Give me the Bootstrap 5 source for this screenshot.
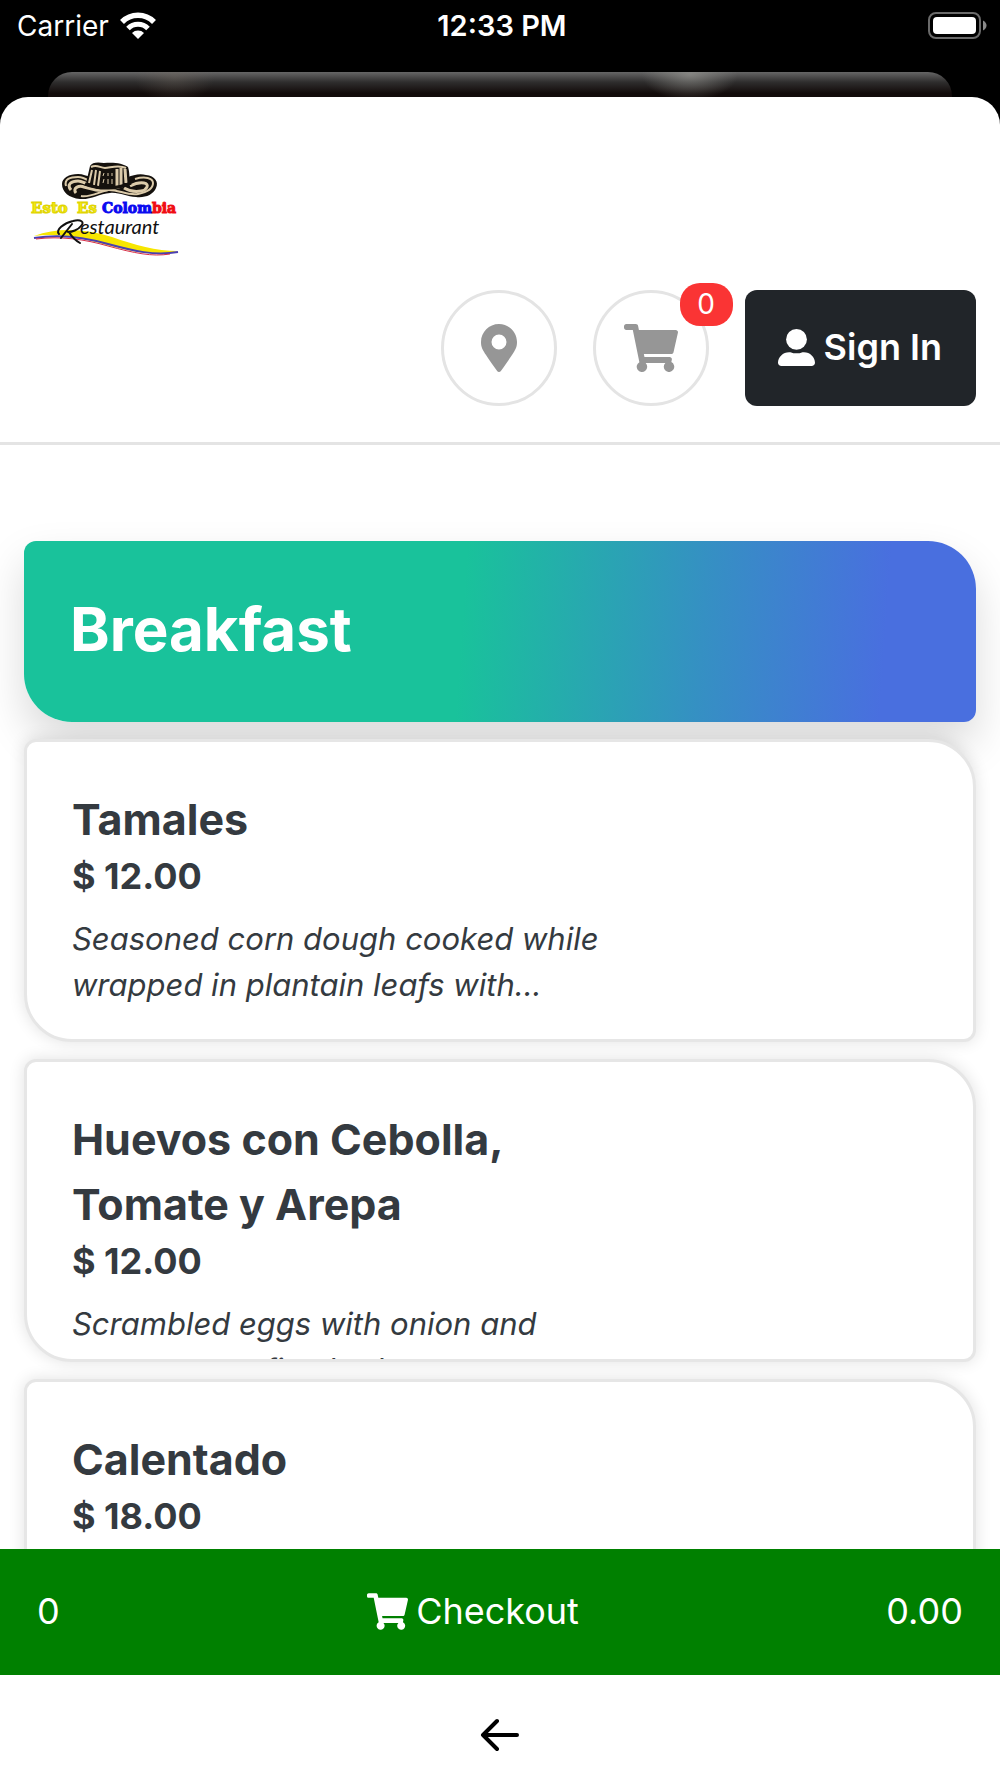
<!DOCTYPE html>
<html lang="en">
<head>
<meta charset="utf-8">
<meta name="viewport" content="width=device-width, initial-scale=1">
<title>Esto Es Colombia Restaurant</title>
<link href="https://cdn.jsdelivr.net/npm/bootstrap@5.3.0/dist/css/bootstrap.min.css" rel="stylesheet">
<style>
  body { font-family: Inter, "Liberation Sans", sans-serif; background: #000; color: #343a40; }
  .phone-status { height: 72px; padding: 0 13px 20px 17px; font-size: 28px; line-height: 34px; color: #fff; }
  .phone-status > * { flex: 1 1 0; }
  .phone-clock { font-size: 29px; font-weight: 600; }
  .sheet-behind { height: 25px; margin: 0 48px; border-radius: 24px 24px 0 0;
    background:
      radial-gradient(ellipse 48px 26px at 71% 10%, rgba(160,160,155,.6), transparent),
      radial-gradient(ellipse 40px 26px at 14% 20%, rgba(120,110,100,.35), transparent),
      linear-gradient(#666, #2f2e2e 40%, #120b0a 85%); }
  .sheet { background: #fff; border-radius: 28px 28px 0 0; min-height: 0; }
  .shop-header { padding: 58px 24px 36px; border-bottom: 3px solid #e4e4e4; }
  .brand-logo { width: 165px; height: 105px; margin-left: -4px; }
  .header-actions { gap: 36px; margin-top: 30px; }
  .round-btn { width: 116px; height: 116px; border: 3px solid #e4e4e4; color: #969696; }
  .cart-count { top: -10px; right: -27px; min-width: 53px; height: 43px; border-radius: 20px; background: #fa3434; color: #fff; font-size: 28px; line-height: 43px; }
  .signin-btn { height: 116px; padding: 0 34px 2px 33px; border-radius: 12px; background: #212529; color: #fff; font-size: 36px; font-weight: 600; gap: 9px; }
  .signin-btn:hover { background: #343a40; color: #fff; }
  .menu-list { padding: 96px 24px 0; gap: 17px; min-height: 0; }
  .menu-banner { padding: 42px 46px 47px; border-radius: 12px 48px 12px 48px; color: #fff; font-size: 60px; line-height: 92px; font-weight: 700;
    background: linear-gradient(94deg, #19c29b 46%, #3590c3 71%, #496fdf 90%); box-shadow: 0 21px 43px rgba(0,0,0,.15); }
  .dish { height: 303px; padding: 45px 45px 0; border: 3px solid #e6e6e6; border-radius: 12px 48px 12px 48px; box-shadow: 0 0 16px rgba(0,0,0,.12); color: #343a40; }
  .dish:hover { color: #343a40; }
  .dish-text { width: 64%; }
  .dish-name { font-size: 43px; line-height: 65px; font-weight: 700; }
  .dish-price { font-size: 36px; line-height: 48px; font-weight: 700; margin-bottom: 16px; }
  .dish-info { font-size: 31px; line-height: 46px; font-style: italic; }
  .checkout-bar { height: 126px; padding: 0 37px 2px; background: #008000; color: #fff; font-size: 36px; }
  .checkout-bar:hover { color: #fff; }
  .back-bar { height: 103px; }
</style>
</head>
<body class="vh-100 d-flex flex-column overflow-hidden">
  <div class="phone-status flex-shrink-0 d-flex align-items-center">
    <div class="d-flex align-items-center gap-2"><span>Carrier</span>
      <svg width="42" height="28" viewBox="0 0 42 28" fill="none" stroke="#fff" aria-label="Wi-Fi">
        <path d="M5 10a22.500 22.500 0 0 1 32 0" stroke-width="5.500"/>
        <path d="M11 16.500a14 14 0 0 1 20 0" stroke-width="5"/>
        <path d="M21 27l-6-6a8.500 8.500 0 0 1 12 0z" fill="#fff" stroke="none"/>
      </svg>
    </div>
    <div class="phone-clock text-center">12:33 PM</div>
    <div class="d-flex justify-content-end">
      <svg width="60" height="28" viewBox="0 0 60 28" aria-label="Battery full">
        <rect x="2" y="1" width="51" height="25" rx="7" fill="none" stroke="#6a6a6a" stroke-width="2"/>
        <rect x="6" y="5" width="43" height="17" rx="4" fill="#fff"/>
        <path d="M56 8.500q3.500 2 3.500 5t-3.500 5z" fill="#8a8a8a"/>
      </svg>
    </div>
  </div>
  <div class="sheet-behind flex-shrink-0"></div>

  <div class="sheet flex-grow-1 d-flex flex-column overflow-hidden">
    <header class="shop-header flex-shrink-0">
      <a href="#" class="d-block" aria-label="Home">
        <svg class="brand-logo d-block" viewBox="0 0 165 105">
          <path d="M42 29c0-6 7-10 16-10 5 0 9 2 12 3h38c5-2 12-4 18-2 9 1 13 7 10 13-3 7-11 10-20 9-9 0-17-5-26-4-11 1-20 7-30 6-11-1-18-7-18-15z" fill="#15110d"/>
          <g fill="none" stroke="#dccbaa" stroke-width="2">
            <path d="M46 31c-2-7 4-9 12-9 5 0 8 2 11 4"/>
            <path d="M51 35c-5-6 1-9 7-9 4 0 8 3 13 4" stroke-width="3"/>
            <path d="M56 38c-4-5 3-8 8-6l12 3c11 1 22-2 31-6" stroke-width="3"/>
            <path d="M61 41c8 2 18-4 27-6 9-1 20 6 30 4s15-6 15-11-8-7-18-4"/>
            <path d="M104 33c5 3 11 4 17 3s9-7 3-8-10 1-14 3" stroke-width="3"/>
          </g>
          <path d="M66 29c1-6 3-13 4-18 2-4 8-4 14-3 9-1 19 0 24 4 2 6 1 11 2 17-12 5-29 6-44 0z" fill="#15110d"/>
          <path d="M71 12c6-3 9 1 14 1s13-4 21 0" fill="none" stroke="#dccbaa" stroke-width="2"/>
          <path d="M72 15l-3 13M76 15l-2 15M80 16l-2 15" fill="none" stroke="#dccbaa" stroke-width="2"/>
          <path d="M97 14v17M101 13v17M105 14l1 14" fill="none" stroke="#dccbaa" stroke-width="3"/>
          <path d="M84 18l-1 3M88 18v3M92 18v3M84 24l-1 4M88 24v5M92 24v5" fill="none" stroke="#dccbaa" stroke-width="1"/>
          <path d="M65 29c15 6 32 5 46-1" fill="none" stroke="#15110d" stroke-width="3"/>
          <g font-family="DejaVu Serif, serif" font-weight="bold" font-size="15" stroke-width="1">
            <text x="11" y="58" fill="#f4ea10" stroke="#e0d400">Esto</text>
            <text x="57" y="58" fill="#f4ea10" stroke="#e0d400">Es</text>
            <text x="82" y="58" font-size="14" fill="#0a0af0" stroke="#0a0af0">Colom<tspan fill="#f00c14" stroke="#f00c14">bia</tspan></text>
          </g>
          <path d="M14 81c24-9 52-7 78 1 23 8 44 14 66 14-26 6-48 0-72-6-25-7-48-12-72-9z" fill="#f7e600"/>
          <path d="M14 83c24-4 50-1 74 6 26 7 46 12 70 8" fill="none" stroke="#4a3fb0" stroke-width="2"/>
          <path d="M16 84c24-3 48 0 72 7 26 7 44 11 62 8" fill="none" stroke="#d82c46" stroke-width="1"/>
          <path d="M39 79c-4-4 5-11 14-13 8-2 12 1 8 5-3 4-9 6-13 6M52 69l-11 14M49 77q4 7 11 11" fill="none" stroke="#111" stroke-width="2" stroke-linecap="round"/>
          <text x="60" y="79" font-family="Lato, sans-serif" font-style="italic" font-size="20" fill="#111">estaurant</text>
        </svg>
      </a>
      <div class="header-actions d-flex justify-content-end align-items-center">
        <button type="button" class="round-btn btn rounded-circle p-0 d-flex align-items-center justify-content-center" aria-label="Location">
          <svg width="36" height="48" viewBox="0 0 384 512" fill="currentColor"><path d="M172 502C27 291 0 270 0 192 0 86 86 0 192 0s192 86 192 192c0 78-27 99-172 310-10 13-30 13-40 0zM192 272a80 80 0 1 0 0-160 80 80 0 0 0 0 160z"/></svg>
        </button>
        <button type="button" class="round-btn btn rounded-circle p-0 position-relative d-flex align-items-center justify-content-center" aria-label="Cart">
          <svg width="54" height="48" viewBox="0 0 576 512" fill="currentColor"><path d="M528 301l47-208c4-15-8-29-23-29H159l-9-45C148 8 138 0 126 0H24C11 0 0 11 0 24v16c0 13 11 24 24 24h70l70 343a56 56 0 1 0 67 9h210a56 56 0 1 0 64-10l5-25c4-15-8-29-23-29H218l-6-32h293c11 0 21-8 23-19z"/></svg>
          <span class="cart-count position-absolute text-center">0</span>
        </button>
        <a href="#" class="signin-btn btn d-flex align-items-center border-0">
          <svg width="37" height="37" viewBox="0 0 448 448" fill="currentColor"><ellipse cx="224" cy="126" rx="126" ry="126"/><path d="M314 280h-17c-44 20-102 20-146 0h-17C60 280 0 340 0 410c0 24 18 38 42 38h364c24 0 42-14 42-38 0-70-60-130-134-130z"/></svg>
          <span>Sign In</span>
        </a>
      </div>
    </header>

    <main class="menu-list flex-grow-1 d-flex flex-column overflow-hidden">
      <h1 class="menu-banner mb-0 flex-shrink-0">Breakfast</h1>
      <a href="#" class="dish d-block bg-white text-decoration-none overflow-hidden flex-shrink-0">
        <div class="dish-text">
          <h2 class="dish-name mb-0">Tamales</h2>
          <div class="dish-price">$ 12.00</div>
          <p class="dish-info mb-0">Seasoned corn dough cooked while wrapped in plantain leafs with...</p>
        </div>
      </a>
      <a href="#" class="dish d-block bg-white text-decoration-none overflow-hidden flex-shrink-0">
        <div class="dish-text">
          <h2 class="dish-name mb-0">Huevos con Cebolla, Tomate y Arepa</h2>
          <div class="dish-price">$ 12.00</div>
          <p class="dish-info mb-0">Scrambled eggs with onion and tomatoes on fine herbs</p>
        </div>
      </a>
      <a href="#" class="dish d-block bg-white text-decoration-none overflow-hidden flex-shrink-0">
        <div class="dish-text">
          <h2 class="dish-name mb-0">Calentado</h2>
          <div class="dish-price">$ 18.00</div>
        </div>
      </a>
    </main>

    <a href="#" class="checkout-bar flex-shrink-0 d-flex align-items-center justify-content-between text-decoration-none">
      <span>0</span>
      <span class="d-flex align-items-center gap-2">
        <svg width="41" height="37" viewBox="0 0 576 512" fill="currentColor"><path d="M528 301l47-208c4-15-8-29-23-29H159l-9-45C148 8 138 0 126 0H24C11 0 0 11 0 24v16c0 13 11 24 24 24h70l70 343a56 56 0 1 0 67 9h210a56 56 0 1 0 64-10l5-25c4-15-8-29-23-29H218l-6-32h293c11 0 21-8 23-19z"/></svg>
        Checkout
      </span>
      <span>0.00</span>
    </a>
    <nav class="back-bar flex-shrink-0 d-flex justify-content-center align-items-center pt-3">
      <button type="button" class="btn p-0 border-0 d-flex" aria-label="Back">
        <svg width="40" height="34" viewBox="0 0 40 34" fill="none" stroke="#000" stroke-width="4" stroke-linecap="round" stroke-linejoin="round"><path d="M17 3L3 17l14 14M3 17h34"/></svg>
      </button>
    </nav>
  </div>
<script src="https://cdn.jsdelivr.net/npm/bootstrap@5.3.0/dist/js/bootstrap.bundle.min.js"></script>
</body>
</html>
